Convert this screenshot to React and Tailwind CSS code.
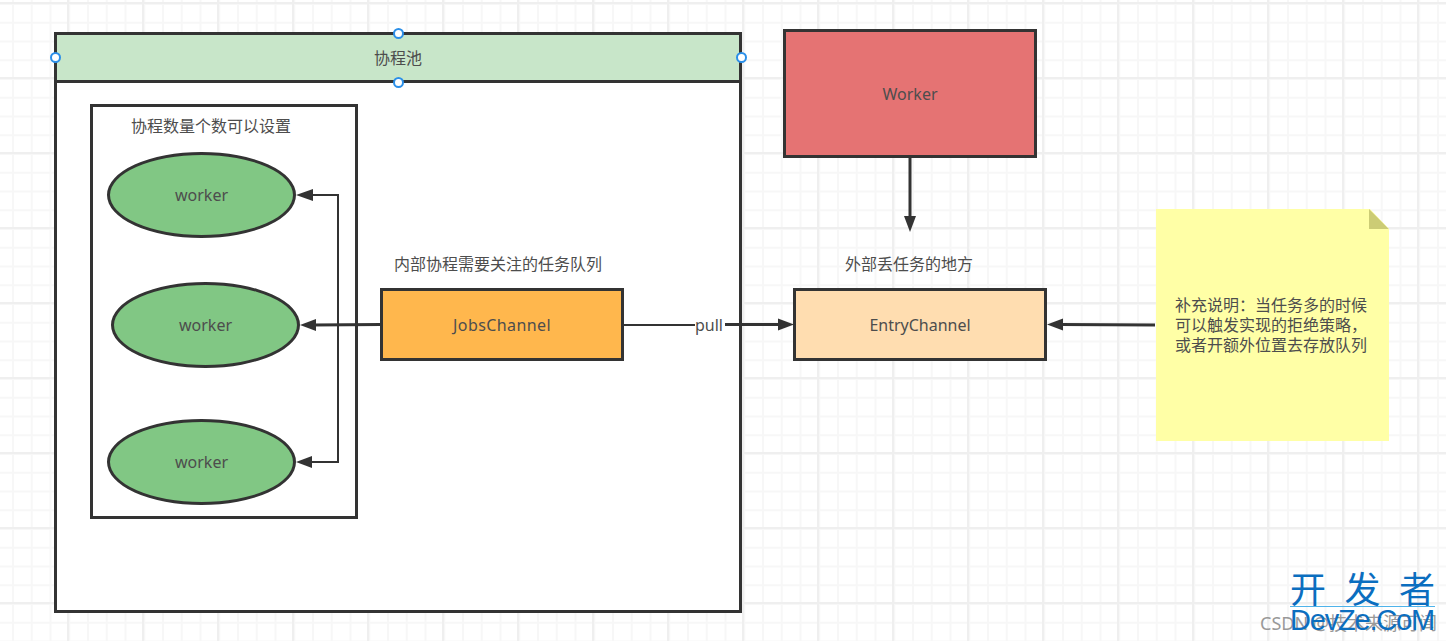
const canvasGrid =
  'bg-white bg-[linear-gradient(#efefef_2px,transparent_2px),linear-gradient(90deg,#efefef_2px,transparent_2px),linear-gradient(#f7f7f7_2px,transparent_2px),linear-gradient(90deg,#f7f7f7_2px,transparent_2px)] bg-size-[75px_75px,75px_75px,18.75px_18.75px,18.75px_18.75px] bg-position-[0_2px,67px_0,0_3px,12px_0]'

const fontStack = "font-['Noto_Sans','Noto_Sans_CJK_SC',sans-serif]"

function Connectors() {
  return (
    <svg className="absolute inset-0" width="1446" height="641" fill="none">
      <g stroke="#333" strokeWidth="2">
        {/* branch from JobsChannel up and down to the outer workers */}
        <path d="M339 195H311M339 462H311M338 195V462" />
        <path d="M381 324.5L313 325" strokeWidth="3" />
        <path d="M623 325H695" />
        <path d="M725 324.5H780" strokeWidth="3" />
        <path d="M910 157V218" strokeWidth="3" />
        <path d="M1155 325L1060 324.5" strokeWidth="3" />
      </g>
      <g fill="#333">
        <path d="M296 195L313 189V201Z" />
        <path d="M300 325L316 319V331Z" />
        <path d="M296 462L312 456V468Z" />
        <path d="M794 324.5L778 318.5V330.5Z" />
        <path d="M910 232L904 216H916Z" />
        <path d="M1047 324.5L1063 318.5V330.5Z" />
      </g>
    </svg>
  )
}

function SelectionHandle({ className }) {
  return <div className={`absolute size-[11px] rounded-full border-2 border-[#2b8fe8] bg-white ${className}`} />
}

function StickyNote() {
  return (
    <div className="absolute left-[1156px] top-[209px] flex h-[232px] w-[233px] items-center bg-[#ffffa6] pl-[19px] [clip-path:polygon(0_0,214px_0,100%_20px,100%_100%,0_100%)]">
      <p className="w-[200px] text-[16px] leading-[20px] text-[#4d4d4d]">
        补充说明：当任务多的时候
        <br />
        可以触发实现的拒绝策略，
        <br />
        或者开额外位置去存放队列
      </p>
      <div className="absolute right-0 top-0 h-5 w-5 bg-[#cccc75] [clip-path:polygon(0_0,100%_100%,0_100%)]" />
    </div>
  )
}

function Node({ className, children }) {
  return (
    <div className={`absolute flex items-center justify-center border-[3px] border-[#333] text-[16px] text-[#4d4d4d] ${className}`}>
      {children}
    </div>
  )
}

function WorkerOval({ className }) {
  return (
    <div className={`flex h-[86px] w-[189px] items-center justify-center rounded-[50%] border-[3px] border-[#333] bg-[#81c784] text-[16px] text-[#4d4d4d] ${className}`}>
      worker
    </div>
  )
}

function Caption({ className, children }) {
  return <div className={`whitespace-nowrap text-[16px] leading-5 text-[#4d4d4d] ${className}`}>{children}</div>
}

export default function App() {
  return (
    <div className={`relative h-[641px] w-[1446px] overflow-hidden ${canvasGrid} ${fontStack}`}>
      <div className="absolute left-[54px] top-[32px] flex h-[581px] w-[688px] flex-col border-[3px] border-[#333] bg-white">
        <div className="flex h-[48px] items-center justify-center border-b-[3px] border-[#333] bg-[#c8e6c9] text-[16px] text-[#4d4d4d]">
          协程池
        </div>
      </div>
      <SelectionHandle className="left-[49.5px] top-[51.5px]" />
      <SelectionHandle className="left-[735.5px] top-[51.5px]" />
      <SelectionHandle className="left-[392.5px] top-[27.5px]" />
      <SelectionHandle className="left-[392.5px] top-[76.5px]" />

      <div className="absolute left-[90px] top-[104px] flex h-[415px] w-[268px] flex-col items-start border-[3px] border-[#333] pt-[9px]">
        <Caption className="ml-[38px]">协程数量个数可以设置</Caption>
        <WorkerOval className="ml-[14px] mt-[16px]" />
        <WorkerOval className="ml-[18px] mt-[44px]" />
        <WorkerOval className="ml-[14px] mt-[51px]" />
      </div>

      <Caption className="absolute left-[394px] top-[254px]">内部协程需要关注的任务队列</Caption>
      <Node className="left-[380px] top-[288px] h-[73px] w-[244px] bg-[#ffb74d] tracking-[0.4px]">JobsChannel</Node>

      <Node className="left-[783px] top-[29px] h-[129px] w-[254px] bg-[#e57373]">Worker</Node>
      <Caption className="absolute left-[845px] top-[254px]">外部丢任务的地方</Caption>
      <Node className="left-[793px] top-[288px] h-[73px] w-[254px] bg-[#ffddb0]">EntryChannel</Node>

      <Connectors />
      <Caption className="absolute left-[695px] top-[315px]">pull</Caption>
      <StickyNote />

      <div className="absolute left-[1260px] top-[611px] whitespace-nowrap text-[18px] leading-6 text-[#999]">CSDN @技术来源可闻</div>
      <div className="absolute left-[1290px] top-[573px] flex w-[145px] flex-col text-[#0b6ebf]">
        <div className="flex justify-between border-b border-[#4fb3ea] text-[36px] leading-[33px]">
          <span>开</span>
          <span>发</span>
          <span>者</span>
        </div>
        <div className="whitespace-nowrap font-['Liberation_Sans',sans-serif] text-[29px] leading-[26px] tracking-[-1.2px]">DevZe.CoM</div>
      </div>
    </div>
  )
}
